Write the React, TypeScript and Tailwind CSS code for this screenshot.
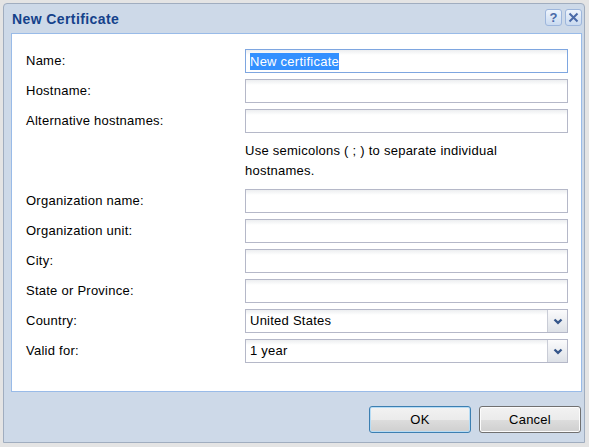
import React from "react";

const font = { fontFamily: '"Liberation Sans", Arial, sans-serif' };

function Chevron() {
    return (
        <svg width="10" height="7" viewBox="0 0 10 7">
            <path d="M1.5 1.5 L5 4.8 L8.5 1.5" fill="none" stroke="#35568a" strokeWidth="2.4" />
        </svg>
    );
}

function Row({ label, children }: { label: string; children: React.ReactNode }) {
    return (
        <div className="flex items-center h-[24px]">
            <div className="w-[219px] shrink-0 text-[13px] tracking-[0.25px] text-black">{label}</div>
            {children}
        </div>
    );
}

function TextInput({ value = "", focused = false }: { value?: string; focused?: boolean }) {
    return (
        <div
            className={
                focused
                    ? "w-[323px] h-[24px] border border-[#7ea6e0] bg-[linear-gradient(to_bottom,#eceef0,#ffffff_5px)] flex items-center px-[4px]"
                    : "w-[323px] h-[24px] border border-[#b5b8c8] bg-[linear-gradient(to_bottom,#eceef0,#ffffff_5px)] flex items-center px-[4px]"
            }
        >
            {value && (
                <span className="bg-[#3390ff] text-white text-[13px] tracking-[0.25px] leading-[17px]">{value}</span>
            )}
        </div>
    );
}

function Combo({ value }: { value: string }) {
    return (
        <div className="w-[323px] h-[24px] border border-[#b5b8c8] flex">
            <div className="flex-1 flex items-center px-[4px] text-[13px] tracking-[0.25px] text-black bg-[linear-gradient(to_bottom,#eceef0,#ffffff_5px)]">
                {value}
            </div>
            <div className="w-[20px] border-l border-[#c9ccd6] bg-[linear-gradient(to_bottom,#fbfbfc,#dde1e7)] flex items-center justify-center">
                <Chevron />
            </div>
        </div>
    );
}

function ToolButton({ children }: { children: React.ReactNode }) {
    return (
        <div className="w-[17px] h-[17px] rounded-[3px] border border-[#9db6dc] bg-[linear-gradient(to_bottom,#eef4fc,#c9daf0)] flex items-center justify-center text-[#4a6aa8] font-bold text-[13px] leading-none">
            {children}
        </div>
    );
}

export default function App() {
    return (
        <div className="w-[589px] h-[447px] bg-[#e4e4e4] pt-[3px] pl-[3px] overflow-hidden" style={font}>
            <div className="w-[582px] h-[440px] rounded-t-[4px] border border-[#a0adbf] bg-[#cdd9e8] flex flex-col pl-[7px] pr-[2px]">
                <div className="h-[29px] flex items-center justify-between shrink-0">
                    <span className="text-[14px] tracking-[0.4px] font-bold text-[#15428b] pl-[1px] pt-[1px]">New Certificate</span>
                    <div className="flex gap-[3px] mb-[2px]">
                        <ToolButton>?</ToolButton>
                        <ToolButton>
                            <svg width="11" height="11" viewBox="0 0 11 11">
                                <path d="M1.5 1.5 L9.5 9.5 M9.5 1.5 L1.5 9.5" stroke="#4a6aa8" strokeWidth="2" />
                            </svg>
                        </ToolButton>
                    </div>
                </div>
                <div className="h-[359px] border border-[#99bbe8] bg-white pl-[14px] pt-[15px] flex flex-col gap-[6px] shrink-0">
                    <Row label="Name:">
                        <TextInput value="New certificate" focused />
                    </Row>
                    <Row label="Hostname:">
                        <TextInput />
                    </Row>
                    <Row label="Alternative hostnames:">
                        <TextInput />
                    </Row>
                    <div className="pl-[219px] py-[2px] text-[13px] tracking-[0.25px] leading-[20px] text-black w-[525px]">
                        Use semicolons ( ; ) to separate individual hostnames.
                    </div>
                    <Row label="Organization name:">
                        <TextInput />
                    </Row>
                    <Row label="Organization unit:">
                        <TextInput />
                    </Row>
                    <Row label="City:">
                        <TextInput />
                    </Row>
                    <Row label="State or Province:">
                        <TextInput />
                    </Row>
                    <Row label="Country:">
                        <Combo value="United States" />
                    </Row>
                    <Row label="Valid for:">
                        <Combo value="1 year" />
                    </Row>
                </div>
                <div className="flex justify-end gap-[8px] pt-[14px] pr-[1px]">
                    <button className="w-[102px] h-[27px] rounded-[3px] border border-[#3c7fb1] bg-[linear-gradient(to_bottom,#f2f2f2_0%,#ebebeb_50%,#dddddd_51%,#cfcfcf_100%)] text-[13px] tracking-[0.25px] text-black shadow-[inset_0_0_0_1px_#b6dcf5]">
                        OK
                    </button>
                    <button className="w-[102px] h-[27px] rounded-[3px] border border-[#707070] bg-[linear-gradient(to_bottom,#f2f2f2_0%,#ebebeb_50%,#dddddd_51%,#cfcfcf_100%)] text-[13px] tracking-[0.25px] text-black shadow-[inset_0_0_0_1px_#fcfcfc]">
                        Cancel
                    </button>
                </div>
            </div>
        </div>
    );
}
